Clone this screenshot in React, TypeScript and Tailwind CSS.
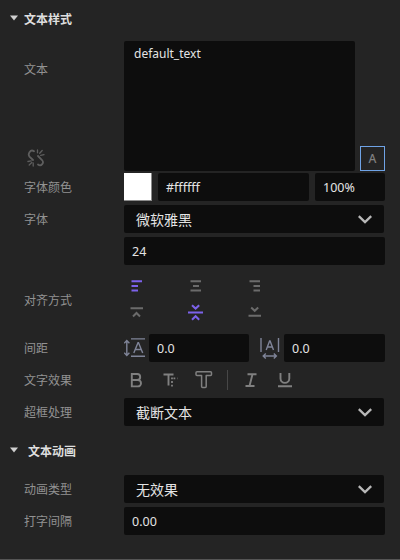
import React from 'react';

const Label = ({ children }: { children?: React.ReactNode }) => (
  <div className="h-7 w-[124px] shrink-0 pl-6 text-[12px] leading-[30px] text-[#929292]">{children}</div>
);

const Input = ({ value, className = '' }: { value: string; className?: string }) => (
  <div className={`h-7 rounded-[2px] bg-[#0d0d0d] px-2 text-[12.5px] leading-[29px] text-[#e4e4e4] ${className}`}>
    {value}
  </div>
);

const Select = ({ value }: { value: string }) => (
  <div className="flex h-7 w-[260px] items-center justify-between rounded-[2px] bg-[#0d0d0d] px-3 text-[14px] leading-[28px] text-[#e4e4e4]">
    <span className="pt-px">{value}</span>
    <svg width="14" height="10" viewBox="0 0 14 10" fill="none" stroke="#b8b8b8" strokeWidth="2.300">
      <path d="M.8 2.100 7 8.100l6.200-6" />
    </svg>
  </div>
);

const Heading = ({ children, gap }: { children: React.ReactNode; gap: string }) => (
  <div className="flex h-6 items-center pl-[10px] text-[12px] font-bold text-[#dedede]">
    <svg className="-mt-[2px]" width="8" height="6" viewBox="0 0 8 6" fill="#d0d0d0">
      <path d="M0 .5h8L4 5.500z" />
    </svg>
    <span className={`pt-[2px] ${gap}`}>{children}</span>
  </div>
);

const BrokenLink = () => (
  <svg width="18" height="18" viewBox="0 0 18 18" fill="none" stroke="#5e5e5e" strokeWidth="1.800" strokeLinecap="round">
    <path d="M7 2.200C5.200 1 3.500 1.700 2.500 3.200S1.500 6.300 2.500 7.600L6 11" />
    <path d="m11 7 4 4c1.300 1.500 1.200 3 .2 4.200s-2.700 1.500-4.200.3" />
    <path strokeWidth="1.300" d="M10.500 3.800V1M12.700 4.200l2.500-2.700M13.700 6.300l3.300-.6M.9 12.500l3.300-.6M2.200 16l2.600-2.500M6.200 17V14" />
  </svg>
);

const Alignment = () => (
  <svg width="150" height="48" viewBox="124 276 150 48" fill="none" stroke="#6b6b6b" strokeWidth="2">
    <g stroke="#7c62ea"><path d="M131.500 281.300H142M131.500 286H138M131.500 290.500H138" /></g>
    <path d="M190.500 281.300H201M193 286h6M190.500 290.500H201" />
    <path d="M249.500 281.300H260M253.500 286h6.500M253.500 290.500h6.500" />
    <path d="M130.500 308.300H143M133 316.500l3.500-3.500 3.500 3.500" />
    <g stroke="#7c62ea"><path d="M188 312.400h15M192 305.200l3.600 3.400 3.600-3.400M192 319.700l3.600-3.500 3.600 3.500" /></g>
    <path d="M248.500 315.700H261M251.200 307.500l3.500 3.300 3.500-3.300" />
  </svg>
);

const LineHeight = () => (
  <svg width="25" height="28" viewBox="124 334 25 28" fill="none" stroke="#7f8498" strokeWidth="1.400">
    <path d="M131 338.900h14M131 356.200h14M126.800 341v14M124.200 343.300l2.600-2.700 2.600 2.700M124.200 352.700l2.600 2.700 2.600-2.700" />
    <path d="m133.800 353 4.200-10.200h.5l4.200 10.200M135.200 349.500h6.200" />
  </svg>
);

const LetterSpacing = () => (
  <svg width="25" height="28" viewBox="259 334 25 28" fill="none" stroke="#7f8498" strokeWidth="1.400">
    <path d="M261 338v14M278.500 338v14M263.500 356h13M265.800 353.400l-2.600 2.600 2.600 2.600M273.800 353.400l2.600 2.600-2.600 2.600" />
    <path d="m266.200 350 3.400-9h.5l3.400 9M267.400 347h4.900" />
  </svg>
);

const Effects = () => (
  <svg width="175" height="24" viewBox="124 368 175 24" fill="none" stroke="#808080" strokeWidth="1.900">
    <path d="M131.800 374h5.400a3 3 0 0 1 0 6H131.800zM131.800 380h6a3.200 3.200 0 0 1 0 6.400h-6z" />
    <path d="M163.500 374.500H173.500M168.500 374v11.500" />
    <path strokeWidth="1.800" strokeDasharray="1.800 1.800" d="M172 377.500v10.500M173.500 378.300h4" />
    <path strokeWidth="1.500" strokeLinejoin="round" d="M197 371.800h13.500q1 0 1 1v1.700q0 1-1 1h-4.300v11q0 1-1 1h-2.600q-1 0-1-1v-11H197q-1 0-1-1v-1.700q0-1 1-1z" />
    <path stroke="#474747" strokeWidth="1" d="M227.500 370v20" />
    <path d="M247.500 374.300h9M245.500 386h9M252.500 374.300l-3 11.700" />
    <path d="M280.500 373v5.500a4.400 4.400 0 0 0 8.800 0V373M278 386.300h14" />
  </svg>
);

export default function App() {
  return (
    <div className="flex h-[560px] w-[400px] flex-col overflow-hidden border-b border-[#555] bg-[#242424] pt-[7px] font-['Noto_Sans','Noto_Sans_CJK_SC',sans-serif]">
      <Heading gap="ml-[6px]">文本样式</Heading>

      <div className="mt-[10px] flex h-[130px]">
        <div className="flex w-[124px] flex-col justify-between pt-[14px] pb-[4px]">
          <Label>文本</Label>
          <div className="pl-[27px]"><BrokenLink /></div>
        </div>
        <div className="w-[231px] rounded-[2px] bg-[#0d0d0d] pt-[4px] pl-[10px] text-[12px] leading-[18px] text-[#e4e4e4]">
          default_text
        </div>
        <div className="ml-[5px] flex h-[25px] w-[25px] items-center justify-center self-end border border-[#6fa3e6] text-[12px] font-medium text-[#808080]">
          A
        </div>
      </div>

      <div className="mt-[2px] flex h-7">
        <Label>字体颜色</Label>
        <div className="h-7 w-7 border-r border-b border-[#8b8b8b] bg-white" />
        <Input value="#ffffff" className="ml-[6px] w-[151px]" />
        <Input value="100%" className="ml-[6px] w-[70px]" />
      </div>

      <div className="mt-1 flex h-7">
        <Label>字体</Label>
        <Select value="微软雅黑" />
      </div>
      <Input value="24" className="mt-1 ml-[124px] w-[261px]" />

      <div className="mt-[11px] flex h-12 items-center">
        <Label>对齐方式</Label>
        <Alignment />
      </div>

      <div className="mt-[10px] flex h-7">
        <Label>间距</Label>
        <LineHeight />
        <Input value="0.0" className="w-[100px]" />
        <div className="ml-[10px]"><LetterSpacing /></div>
        <Input value="0.0" className="w-[101px]" />
      </div>

      <div className="mt-1 flex h-7 items-center">
        <Label>文字效果</Label>
        <Effects />
      </div>

      <div className="mt-1 flex h-7">
        <Label>超框处理</Label>
        <Select value="截断文本" />
      </div>

      <div className="mt-[13px]"><Heading gap="ml-[10px]">文本动画</Heading></div>

      <div className="mt-[12px] flex h-7">
        <Label>动画类型</Label>
        <Select value="无效果" />
      </div>
      <div className="mt-1 flex h-7">
        <Label>打字间隔</Label>
        <Input value="0.00" className="w-[261px]" />
      </div>
    </div>
  );
}
